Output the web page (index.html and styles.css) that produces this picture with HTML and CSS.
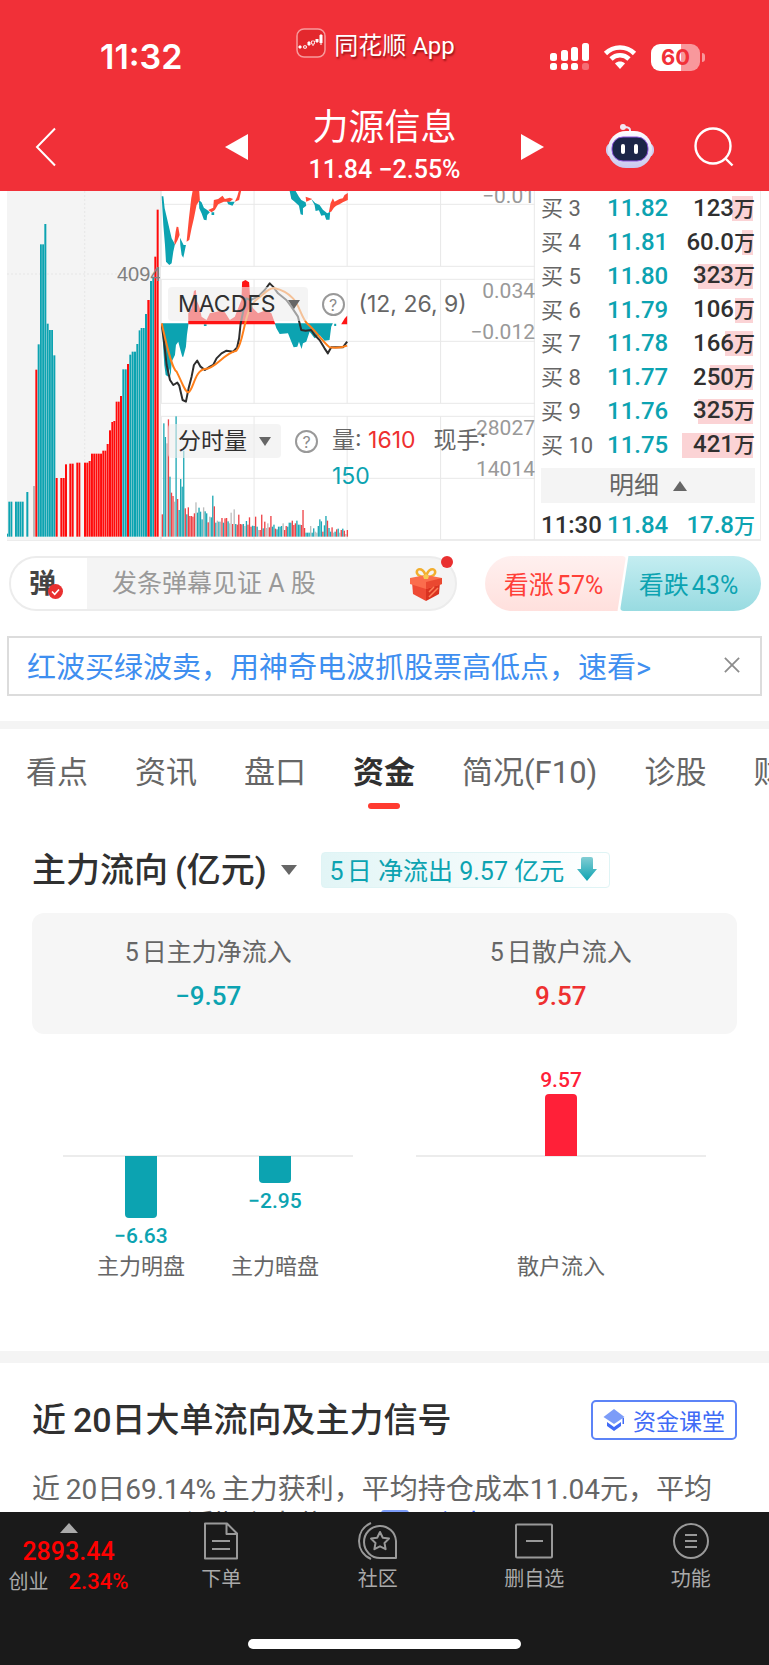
FILE: index.html
```html
<!DOCTYPE html>
<html lang="zh-CN">
<head>
<meta charset="utf-8">
<meta name="viewport" content="width=device-width, initial-scale=1">
<title>力源信息</title>
<link rel="stylesheet" href="styles.css">
</head>
<body>
<div class="app">
  <header class="top">
    <div class="status">
      <span class="clock">11:32</span>
      <span class="from-app">
        <svg class="app-logo" viewBox="0 0 30 30" aria-hidden="true">
          <rect x="1" y="1" width="28" height="28" rx="7" fill="#e3282d" stroke="#f79a9c" stroke-width="1.5"/>
          <path d="M4 17v4M9 17v4M13 13v5M17 13v5M21 11v4M25 6v11" stroke="#fff" stroke-width="1"/>
          <path d="M2.500 18h3v2h-3zM11.500 14h3v3h-3zM19.500 11h3v3h-3zM23.500 7h3v8h-3z" fill="#fff"/>
          <path d="M7.500 18h3v2h-3zM15.500 13h3v3h-3z" fill="#e3282d" stroke="#fff" stroke-width=".8"/>
        </svg>
        同花顺 App
      </span>
      <span class="signals">
        <svg width="39" height="28" viewBox="0 0 39 28" fill="#fff" aria-hidden="true">
          <rect x="0" y="10" width="7" height="8" rx="2.500"/><rect x="11" y="7" width="7" height="11" rx="2.500"/><rect x="21" y="4" width="7" height="14" rx="2.500"/><rect x="32" y="0" width="7" height="18" rx="2.500"/>
          <rect x="0" y="20" width="7" height="7" rx="2.500"/><rect x="11" y="20" width="7" height="7" rx="2.500"/><rect x="21" y="20" width="7" height="7" rx="2.500"/><rect x="32" y="20" width="7" height="7" rx="2.500" opacity=".3"/>
        </svg>
        <svg width="34" height="26" viewBox="0 0 34 26" fill="none" stroke="#fff" stroke-width="4.600" aria-hidden="true">
          <path d="M2.500 9.500C10.500 1.500 23.500 1.500 31.500 9.500M8 15C13 10 21 10 26 15"/>
          <path d="M17 25l-5-5.500c3-2.600 7-2.600 10 0z" fill="#fff" stroke="none"/>
        </svg>
        <span class="battery">60</span>
      </span>
    </div>
    <div class="titlebar">
      <button class="icon-btn back" aria-label="返回"><svg width="22" height="40" viewBox="0 0 22 40" fill="none" stroke="#fff" stroke-width="2"><path d="M20 1.500L2 20l18 18.500"/></svg></button>
      <div class="stock">
        <button class="icon-btn" aria-label="上一只"><svg width="24" height="26" viewBox="0 0 24 26"><path d="M23 0v26L0 13z" fill="#fff"/></svg></button>
        <div class="stock-name"><h1>力源信息</h1><p>11.84 −2.55%</p></div>
        <button class="icon-btn" aria-label="下一只"><svg width="24" height="26" viewBox="0 0 24 26"><path d="M1 0v26l23-13z" fill="#fff"/></svg></button>
      </div>
      <div class="tools">
        <button class="icon-btn" aria-label="智能助手">
          <svg width="48" height="46" viewBox="0 0 48 46">
            <defs><linearGradient id="shell" x2="0" y2="1"><stop offset="0" stop-color="#fff"/><stop offset="1" stop-color="#c9c8ee"/></linearGradient></defs>
            <path d="M24 9V6c0-3-3-3-6-3" fill="none" stroke="#e8e6f8" stroke-width="2"/><circle cx="17" cy="3" r="3" fill="#f4e6f2"/>
            <rect x="0" y="19" width="48" height="14" rx="6" fill="#cfcdf0"/>
            <rect x="2" y="7" width="44" height="37" rx="18" fill="url(#shell)"/>
            <rect x="6" y="13" width="36" height="24" rx="11" fill="#1b2547" stroke="#8c55dc" stroke-width="1"/>
            <rect x="15" y="20" width="4" height="10" rx="2" fill="#fff"/><rect x="28" y="20" width="4" height="10" rx="2" fill="#fff"/>
          </svg>
        </button>
        <button class="icon-btn" aria-label="搜索"><svg width="40" height="40" viewBox="0 0 40 40" fill="none" stroke="#fff" stroke-width="2.400"><circle cx="19" cy="19" r="17.500"/><path d="M31 31l7.500 7.500"/></svg></button>
      </div>
    </div>
  </header>

  <main class="content">
    <section class="trade">
      <div class="depth">
        <svg id="depth" viewBox="21 18 459 1050" preserveAspectRatio="none" aria-hidden="true">
          <path d="M21 267H480M254 18V1068" stroke="#e6e6e6" stroke-width="3" stroke-dasharray="6 6" fill="none"/>
        </svg>
        <span class="depth-label">4094</span>
      </div>
      <div class="minute">
        <svg id="minute" viewBox="483 18 1125 1050" preserveAspectRatio="none" aria-hidden="true">
          <path d="M483 58H1608M483 244H1608M483 283H1608M483 469H1608M483 655H1608M483 694H1608M483 880H1608M483 1066H1608M484 18V244M484 283V655M484 694V1066M763 18V244M763 283V655M763 694V1066M1043 18V244M1043 283V655M1043 694V1066M1324 18V244M1324 283V655M1324 694V1066M1606 18V1066" stroke="#e8e8e8" stroke-width="3" fill="none"/>
          <g fill="#0ca3b1">
            <path d="M485 34H490L494 70 500 95 508 130 515 160 525 178 520 200 515 235 508 240 498 230 495 180 490 120ZM540 158L545 168 551 180 558 180 553 205 550 218 545 210 541 180ZM597 45L605 52 612 68 622 75 630 82 622 90 620 106 612 104 605 85 598 70ZM678 42L690 50 705 50 698 62 685 58ZM635 82h8v8h-8zM870 18H888L898 35 905 45 918 52 920 62 910 70 910 90 903 88 898 62 885 50 875 42ZM935 42L947 54 960 60 970 74 983 85 992 80 990 104 980 104 975 90 965 92 958 76 948 78 945 60Z"/>
            <path d="M485 415H566L561 450 558 485 550 515 547 515 540 490 535 470 528 480 525 510 515 530 512 575 508 550 505 575 497 570 493 540ZM825 415H1000L995 425 990 465 975 467 960 450 945 460 930 440 920 470 910 475 906 492 898 470 893 485 882 487 875 470 865 445 840 447 830 430ZM612 418h8v5h-8zM1004 416h6v7h-6z"/>
          </g>
          <path d="M523 170L527 140 530 125 535 126 539 150 533 165 525 180ZM560 170L567 100 574 40 578 18H598L600 45 590 60 582 100 575 130 568 165ZM625 75L640 68 642 45 655 42 668 32 675 42 690 38 700 42 690 50 672 50 655 58 645 75 635 82ZM705 50L712 35 717 18H724L718 45ZM918 35L938 42 920 50ZM988 82L993 55 1000 40 1005 50 1020 42 1030 40 1035 30 1045 24V45L1030 52 1020 58 1010 62 1003 68 995 80Z" fill="#ff4a38"/>
          <path d="M565 418V385L575 370 582 318 588 315 590 345 600 370 605 395 620 405 630 385 660 378 675 382 690 405 705 395 715 370 725 345 727 290 737 285 748 292 752 350 760 370 775 385 800 375 815 385 827 418ZM1025 418L1036 400 1043 392V418Z" fill="#ff1414"/>
          <path d="M485 418L492 470 500 540 510 585 520 600 532 593 538 602 548 645 558 650 566 610 575 575 582 540 592 527 602 545 615 555 630 545 640 540 650 520 665 505 680 497 700 500 712 487 718 460 722 420 730 380 740 340 752 345 775 335 795 315 810 295 820 305 835 325 860 345 875 365 895 395 905 435 918 437 935 435 945 450 960 465 975 490 985 505 995 487 1030 487 1043 470" fill="none" stroke="#2d2d2d" stroke-width="6" stroke-linejoin="round"/>
          <path d="M485 415C500 480 515 550 530 560C550 600 555 622 566 622C580 615 585 555 615 552C650 550 670 505 710 497C735 470 730 370 775 340C800 320 810 308 825 310C850 315 865 325 880 340C900 360 905 400 925 418C950 440 970 470 990 487C1010 490 1030 487 1043 482" fill="none" stroke="#ff7f1a" stroke-width="6"/>
        </svg>
        <span class="axis a1">−0.01</span><span class="axis a2">0.034</span><span class="axis a3">−0.012</span><span class="axis a4">28027</span><span class="axis a5">14014</span>
        <div class="indicator macd">
          <button class="tag tag-wide">MACDFS<i class="caret"></i></button><button class="help" aria-label="说明">?</button><span>(12, 26, 9)</span>
        </div>
        <div class="indicator volume">
          <button class="tag">分时量<i class="caret"></i></button><button class="help" aria-label="说明">?</button>
          <p>量: <b class="up">1610</b><span class="now">现手:</span> <b class="down">150</b></p>
        </div>
      </div>
      <div class="book">
        <table>
          <tr><th>买 3</th><td class="down">11.82</td><td class="qty" style="--w:21px">123<small>万</small></td></tr>
          <tr><th>买 4</th><td class="down">11.81</td><td class="qty" style="--w:11px">60.0<small>万</small></td></tr>
          <tr><th>买 5</th><td class="down">11.80</td><td class="qty" style="--w:55px">323<small>万</small></td></tr>
          <tr><th>买 6</th><td class="down">11.79</td><td class="qty" style="--w:18px">106<small>万</small></td></tr>
          <tr><th>买 7</th><td class="down">11.78</td><td class="qty" style="--w:28px">166<small>万</small></td></tr>
          <tr><th>买 8</th><td class="down">11.77</td><td class="qty" style="--w:43px">250<small>万</small></td></tr>
          <tr><th>买 9</th><td class="down">11.76</td><td class="qty" style="--w:55px">325<small>万</small></td></tr>
          <tr><th>买 10</th><td class="down">11.75</td><td class="qty" style="--w:71px">421<small>万</small></td></tr>
        </table>
        <button class="detail">明细<i class="caret caret-up"></i></button>
        <div class="deal"><time>11:30</time><span class="down">11.84</span><span class="down">17.8<small>万</small></span></div>
      </div>
    </section>

    <section class="social">
      <div class="danmu">
        <button class="danmu-switch" aria-label="弹幕开关">弹<svg width="15" height="15" viewBox="0 0 15 15"><circle cx="7.500" cy="7.500" r="7.500" fill="#e93030"/><path d="M4 7.500l2.700 2.800L11 5.500" fill="none" stroke="#fff" stroke-width="1.600"/></svg></button>
        <input type="text" aria-label="发弹幕" placeholder="发条弹幕见证 A 股">
        <button class="icon-btn gift" aria-label="礼物">
          <svg width="34" height="36" viewBox="0 0 34 36">
            <path d="M17 11C10 11 7 8 8 5s7-3 9 6c2-9 8-9 9-6s-2 6-9 6z" fill="none" stroke="#f2ae2e" stroke-width="2.500"/>
            <path d="M3 16l14 6v13L4 28z" fill="#ee4a34"/><path d="M31 16l-14 6v13l13-7z" fill="#d93220"/>
            <path d="M1 12l16-3 16 3v6l-16 5L1 18z" fill="#fb6d4d"/><path d="M17 16l16-4v6l-16 5z" fill="#ea4830"/>
            <path d="M20 31l9-9M20 26l5-5" stroke="#ff8058" stroke-width="1.500"/><path d="M14 10l3-2 3 2-1 3h-4z" fill="#f8c850"/>
          </svg>
        </button>
      </div>
      <div class="vote">
        <button class="vote-up">看涨57%</button><button class="vote-down">看跌43%</button>
      </div>
    </section>

    <aside class="promo">
      <a href="#promo">红波买绿波卖，用神奇电波抓股票高低点，速看&gt;</a>
      <button class="icon-btn" aria-label="关闭"><svg width="16" height="16" viewBox="0 0 18 18" stroke="#8c8c8c" stroke-width="2"><path d="M1 1l16 16M17 1L1 17"/></svg></button>
    </aside>

    <nav class="tabs">
      <a href="#v">看点</a><a href="#n">资讯</a><a href="#p">盘口</a><a href="#f" class="active">资金</a><a href="#b">简况(F10)</a><a href="#d">诊股</a><a href="#c">财务</a>
    </nav>

    <section class="flow">
      <div class="flow-head">
        <h2>主力流向&thinsp;(亿元)</h2><i class="caret"></i>
        <span class="badge">5日 净流出 9.57 亿元
          <svg width="20" height="24" viewBox="0 0 20 24"><defs><linearGradient id="arrow" x2="0" y2="1"><stop offset="0" stop-color="#82cdd4"/><stop offset="1" stop-color="#0ca3b1"/></linearGradient></defs><path d="M4 2q0-2 2-2h8q2 0 2 2v10h4L10 24 0 12h4z" fill="url(#arrow)"/></svg>
        </span>
      </div>
      <dl class="summary">
        <div><dt>5日主力净流入</dt><dd class="down">−9.57</dd></div>
        <div><dt>5日散户流入</dt><dd class="up">9.57</dd></div>
      </dl>
      <div class="bars">
        <div class="group">
          <div class="col"><div class="pos"></div><div class="neg"><i style="height:62px"></i><b>−6.63</b></div><span>主力明盘</span></div>
          <div class="col"><div class="pos"></div><div class="neg"><i style="height:27px"></i><b>−2.95</b></div><span>主力暗盘</span></div>
        </div>
        <div class="group">
          <div class="col"><div class="pos"><b>9.57</b><i style="height:62px"></i></div><div class="neg"></div><span>散户流入</span></div>
        </div>
      </div>
    </section>

    <section class="orders">
      <div class="orders-head">
        <h2>近&thinsp;20日大单流向及主力信号</h2>
        <button class="lesson"><svg width="22" height="22" viewBox="0 0 22 22"><path d="M11 0l10.500 8L11 15 .5 8z" fill="#7c9cf8"/><path d="M4 13l7 5 7-5v4l-7 5-7-5zM19.500 9h1.500v6h-1.500z" fill="#416bf6"/></svg>资金课堂</button>
      </div>
      <p>近&thinsp;20日69.14%&thinsp;主力获利，平均持仓成本11.04元，平均<br>日 −2.55%，近期主力信号 <i class="mark"></i> <a href="#s">主力买入</a></p>
    </section>
  </main>

  <footer class="dock">
    <nav>
      <a class="index" href="#i"><i class="caret caret-up"></i><strong>2893.44</strong><span><em>创业</em><b>2.34%</b></span></a>
      <a href="#o"><svg viewBox="0 0 40 38"><path d="M4 1.500h22l10 10v25H4zM25.500 2v10H36M11 19h18M11 27h18"/></svg>下单</a>
      <a href="#q"><svg viewBox="0 0 40 38"><path d="M38 36V19a16 16 0 1 0-16 17zM13 1C-3 8-3 30 13 37"/><path d="M22 10l2.800 5.700 6.200.9-4.500 4.400 1.100 6.200L22 24.300l-5.600 2.900 1.100-6.200-4.500-4.400 6.200-.9z"/></svg>社区</a>
      <a href="#r"><svg viewBox="0 0 40 38"><rect x="2" y="2.500" width="36" height="33" rx="1"/><path d="M12 19h17"/></svg>删自选</a>
      <a href="#m"><svg viewBox="0 0 40 38"><circle cx="20" cy="19" r="17"/><path d="M14 13h12M14 19h12M14 25h12"/></svg>功能</a>
    </nav>
    <div class="home-bar"></div>
  </footer>
</div>
<script src="charts.js"></script>
</body>
</html>
```
FILE: styles.css
```css
* { box-sizing: border-box; }
body, h1, h2, p, dl, dd { margin: 0; }
body {
  font-family: Roboto, "Noto Sans CJK SC", sans-serif;
  color: #303030;
  text-autospace: normal;
}
button, input { font: inherit; color: inherit; border: 0; padding: 0; background: none; }
a { color: inherit; text-decoration: none; }
svg { display: block; flex: none; }
i, em { font-style: normal; }
.up { color: #ee3030; }
.down { color: #0ca3b1; }
.icon-btn { display: flex; align-items: center; justify-content: center; }
.caret { display: inline-block; border: 8px solid transparent; border-top: 10px solid #666; border-bottom: 0; }
.caret-up { border-top: 0; border-bottom: 10px solid #666; }

.app { height: 100vh; display: flex; flex-direction: column; overflow: hidden; }

.top { background: #f13038; color: #fff; flex: none; }
.status { display: grid; grid-template-columns: 1fr auto 1fr; height: 96px; padding: 0 69px; }
.clock { font: 600 34px/36px Inter, sans-serif; margin: 39px 0 0 31px; }
.from-app { display: flex; align-items: center; gap: 8px; height: 30px; margin-top: 28px; padding-right: 18px; font-size: 24px; text-shadow: 1px 2px 2px rgba(90, 0, 0, .6); }
.app-logo { width: 30px; height: 30px; }
.signals { display: flex; align-items: center; justify-content: flex-end; gap: 14px; height: 28px; margin-top: 43px; }
.battery { position: relative; width: 49px; height: 27px; border-radius: 9px; background: linear-gradient(90deg, #fff 61%, #f8989c 61%); color: #f13038; font: 700 22px/27px Inter, sans-serif; text-align: center; }
.battery::after { content: ""; position: absolute; left: 51px; top: 9px; width: 3px; height: 9px; border-radius: 0 3px 3px 0; background: #f8989c; }
.titlebar { display: grid; grid-template-columns: 1fr auto 1fr; align-items: center; height: 95px; padding: 6px 35px 0; }
.back { width: 22px; }
.stock { display: flex; align-items: center; gap: 59px; }
.stock-name { text-align: center; }
.stock-name h1 { font-weight: 400; font-size: 36px; line-height: 40px; }
.stock-name p { margin-top: 6px; font-weight: 500; font-size: 25px; line-height: 32px; }
.tools { display: flex; justify-content: flex-end; align-items: center; gap: 40px; }

.content { flex: 1; min-height: 0; overflow: hidden; background: #fff; }
.trade { display: grid; grid-template-columns: 153fr 375fr 226fr; margin: 0 8px 0 7px; height: 350px; border-bottom: 2px solid #ececec; }
.trade svg { width: 100%; height: 350px; }
.depth { position: relative; background: #f4f4f4; overflow: hidden; }
.depth-label { position: absolute; left: 110px; top: 71px; font: 20px/24px "Liberation Sans", sans-serif; color: #808080; }
.minute { position: relative; overflow: hidden; border-left: 1px solid #e8e8e8; }
.axis { position: absolute; right: 0; font-size: 21px; line-height: 24px; color: #999; }
.a1 { top: -7px; }
.a2 { top: 88px; }
.a3 { top: 129px; }
.a4 { top: 225px; }
.a5 { top: 266px; }
.indicator { position: absolute; left: 7px; display: flex; font: 23px/34px Inter, "Noto Sans CJK SC", sans-serif; color: #666; text-autospace: no-autospace; white-space: nowrap; }
.macd { top: 96px; }
.volume { top: 233px; }
.tag { display: flex; align-items: center; gap: 12px; height: 34px; padding: 0 10px; border-radius: 4px; background: rgba(236, 236, 236, .6); color: #303030; }
.tag-wide { padding-right: 8px; }
.tag .caret { border-width: 9px 6px 0; }
.help { width: 23px; height: 23px; margin: 6px 14px 0; border: 2px solid #999; border-radius: 50%; color: #8c8c8c; font-size: 16px; line-height: 18px; }
.volume p { width: 170px; margin-top: -2px; white-space: normal; line-height: 36px; }
.minute b { font-weight: 400; }
.now { margin-left: 18px; }
.book { padding: 1px 5px 0 6px; border-right: 1px solid #ececec; text-autospace: no-autospace; }
.book table { width: 100%; height: 270px; border-collapse: collapse; table-layout: fixed; }
.book th { width: 60px; padding: 0; text-align: left; font-weight: 400; font-size: 22px; line-height: 25px; color: #666; white-space: nowrap; }
.book td { padding: 0 0 0 6px; font-size: 24px; line-height: 25px; font-weight: 500; }
.book small { font-size: 21px; font-weight: 500; }
.book .qty { padding: 0; text-align: right; background: linear-gradient(#fbd3d5, #fbd3d5) right 2px center / var(--w) 25px no-repeat; }
.detail { display: flex; align-items: center; justify-content: center; gap: 14px; width: 100%; height: 35px; margin-top: 6px; background: #f4f4f4; color: #666; font-size: 25px; line-height: 35px; }
.detail .caret { border-width: 0 7px 10px; }
.deal { display: grid; grid-template-columns: 66px 1fr auto; font-weight: 500; font-size: 24px; line-height: 28px; padding-top: 8px; }

.social { display: flex; justify-content: space-between; gap: 28px; margin: 15px 8px 0 9px; }
.danmu { position: relative; flex: 1; max-width: 448px; display: flex; height: 55px; border: 2px solid #ececec; border-radius: 28px; background: #f4f4f4; }
.danmu::after { content: ""; position: absolute; right: 2px; top: -2px; width: 12px; height: 12px; border-radius: 50%; background: #e93030; }
.danmu-switch { position: relative; width: 76px; padding: 0 13px 5px 0; border-radius: 26px 0 0 26px; background: #fff; font-weight: 700; font-size: 27px; color: #444; }
.danmu-switch svg { position: absolute; left: 37px; top: 26px; }
.danmu input { flex: 1; min-width: 0; padding-left: 25px; font-size: 25px; }
.danmu input::placeholder { color: #999; opacity: 1; }
.gift { margin-right: 12px; }
.vote { display: flex; width: 276px; height: 55px; font-size: 25px; }
.vote button { height: 55px; padding: 0 4px 2px 0; white-space: nowrap; }
.vote-up { flex: 1; border-radius: 28px 4px 4px 28px; background: linear-gradient(#fff0ef, #ffe0dd); color: #ff4038; clip-path: polygon(0 0, 100% 0, 94% 100%, 0 100%); }
.vote-down { flex: 1; margin-left: -6px; border-radius: 4px 28px 28px 4px; background: linear-gradient(#c4edf1, #98dbe1); color: #0ca3b1; clip-path: polygon(6% 0, 100% 0, 100% 100%, 0 100%); }

.promo { display: flex; align-items: center; justify-content: space-between; margin: 25px 7px; height: 60px; padding: 0 20px 2px 18px; border: 2px solid #dcdcdc; font-size: 29px; color: #3f8ff0; white-space: nowrap; }

.tabs { display: flex; gap: 47px; height: 92px; padding: 11px 0 0 26px; border-top: 8px solid #f4f4f4; font-size: 31px; line-height: 66px; color: #666; white-space: nowrap; overflow: hidden; }
.tabs a { flex: none; position: relative; text-autospace: no-autospace; }
.tabs .active { color: #303030; font-weight: 700; }
.tabs .active::after { content: ""; position: absolute; left: 50%; top: 63px; width: 32px; height: 6px; margin-left: -16px; border-radius: 3px; background: #ff3b30; }

.flow { padding: 39px 32px 0; }
.flow-head { display: flex; align-items: center; height: 36px; }
h2 { font-weight: 500; font-size: 34px; line-height: 40px; white-space: nowrap; text-autospace: no-autospace; }
.flow-head .caret { margin: 0 24px 0 14px; }
.badge { display: flex; align-items: center; gap: 13px; height: 36px; padding: 0 12px 2px 8px; border: 1px solid #dff4f5; border-radius: 4px; background: linear-gradient(90deg, #e2f5f6, #fff); color: #0ca3b1; font-size: 25px; white-space: nowrap; }
.summary { display: flex; margin-top: 25px; padding: 22px 0 22px; border-radius: 12px; background: #f6f6f6; text-align: center; }
.summary div { flex: 1; }
.summary dt { font-size: 25px; line-height: 36px; color: #666; }
.summary dd { font-weight: 500; font-size: 26px; line-height: 32px; margin-top: 9px; }
.bars { display: flex; gap: 63px; padding: 0 31px; }
.group { flex: 1; display: flex; justify-content: center; background: linear-gradient(#ececec, #ececec) 0 121px / 100% 2px no-repeat; }
.col { width: 134px; display: flex; flex-direction: column; align-items: center; font-size: 22px; line-height: 28px; color: #666; }
.pos, .neg { display: flex; flex-direction: column; align-items: center; }
.pos { height: 122px; justify-content: flex-end; color: #ff2038; }
.neg { height: 97px; color: #0ca3b1; }
.col i { width: 32px; background: currentColor; }
.pos i { border-radius: 4px 4px 0 0; }
.neg i { border-radius: 0 0 4px 4px; }
.col b { font-weight: 500; font-size: 21px; line-height: 28px; }
.neg b { margin-top: 4px; }

.orders { margin-top: 70px; padding: 37px 32px 0; border-top: 12px solid #f4f4f4; }
.orders-head { display: flex; justify-content: space-between; align-items: center; }
.lesson { display: flex; align-items: center; gap: 8px; height: 40px; padding: 0 10px; border: 2px solid #5c83f7; border-radius: 5px; color: #416bf6; font-size: 23px; white-space: nowrap; }
.orders p { margin-top: 32px; font-size: 28px; line-height: 36px; color: #666; white-space: nowrap; text-autospace: no-autospace; }
.orders p a { color: #416bf6; }
.mark { display: inline-block; width: 28px; height: 28px; margin: 0 17px 0 20px; border-radius: 3px; background: #7c9cf8; vertical-align: -3px; }

.dock { flex: none; height: 153px; background: #1a1a1a; color: #aaa; display: flex; flex-direction: column; justify-content: space-between; align-items: center; }
.dock nav { display: flex; width: 100%; padding-top: 10px; font-size: 20px; line-height: 26px; }
.dock nav a { flex: 1; display: flex; flex-direction: column; align-items: center; gap: 6px; }
.dock nav .index { flex: 0 0 143px; gap: 0; padding: 1px 6px 0 0; }
.index .caret { border-bottom-color: #aaa; border-width: 0 9px 10px; }
.index strong { font-weight: 500; font-size: 25px; line-height: 28px; margin-top: 5px; color: #f00; }
.index span { display: flex; gap: 20px; line-height: 30px; margin-top: 1px; }
.index b { font-weight: 500; font-size: 22px; color: #f00; }
.dock svg { width: 40px; height: 38px; fill: none; stroke: #999; stroke-width: 2; stroke-linejoin: round; }
.home-bar { width: 273px; height: 10px; margin-bottom: 16px; border-radius: 5px; background: #fff; }
```
FILE: charts.js
```javascript
const NS = "http://www.w3.org/2000/svg";
const COLORS = { t: "#0ca3b1", r: "#ff0a0a", g: "#b9b9b9" };
const BASE = 1055;

function bar(svg, x, width, top, fill) {
  const rect = document.createElementNS(NS, "rect");
  rect.setAttribute("x", x);
  rect.setAttribute("y", top);
  rect.setAttribute("width", width);
  rect.setAttribute("height", BASE - top);
  rect.setAttribute("fill", fill);
  svg.append(rect);
}

// Each run: colour, left, right, top
const depth = document.getElementById("depth");
[
  ["t", 21, 25, 1046], ["t", 25, 38, 950], ["t", 45, 72, 950], ["t", 79, 86, 921], ["g", 99, 106, 903],
  ["r", 106, 113, 554], ["t", 113, 120, 478], ["t", 120, 133, 178], ["t", 133, 140, 117],
  ["t", 140, 147, 416], ["t", 147, 160, 435], ["t", 160, 167, 511], ["r", 167, 174, 879],
  ["r", 181, 195, 879], ["r", 195, 202, 838], ["r", 208, 222, 836], ["r", 229, 242, 833],
  ["r", 252, 266, 833], ["r", 266, 273, 828], ["r", 273, 307, 806], ["r", 307, 320, 797],
  ["r", 320, 327, 777], ["r", 327, 334, 736], ["r", 334, 340, 711], ["r", 340, 347, 708],
  ["r", 347, 360, 650], ["r", 360, 367, 633], ["t", 367, 381, 553], ["r", 381, 388, 537],
  ["t", 388, 395, 509], ["t", 395, 409, 500], ["t", 409, 416, 477], ["t", 416, 422, 436],
  ["t", 422, 435, 429], ["t", 435, 442, 387], ["r", 442, 450, 345], ["t", 450, 457, 288],
  ["t", 457, 463, 275], ["r", 463, 470, 215], ["r", 470, 477, 74]
].forEach(([c, left, right, top]) => {
  const count = Math.max(1, Math.round((right - left) / 6.8));
  const step = (right - left) / count;
  for (let i = 0; i < count; i++) bar(depth, left + i * step, step - 1, top, COLORS[c]);
});

// Per-minute volume: colour and height
const minute = document.getElementById("minute");
const first = minute.querySelector("g");
const layer = document.createElementNS(NS, "g");
minute.insertBefore(layer, first);
const tones = { t: "#1fa8b4", r: "#ee4347", g: "#bdbdbd" };
("r67 t340 t299 g280 r352 t180 r132 r122 g105 t361 r113 t80 t173 t150 t258 r85 t67 r88 r62 r62 r60 r70 g103 t72 t87 " +
 "t75 t52 g88 t76 t70 r43 g60 t58 t123 r91 t42 g48 t45 g45 r56 t42 r55 r56 t46 g40 g72 r38 g82 t38 r36 r66 r38 " +
 "r37 t38 g32 t47 r36 r58 r30 t33 t32 r60 t30 g20 r20 r66 t25 r45 g26 g40 r28 r62 t30 t36 r24 t22 t30 t30 t32 g40 " +
 "r20 r32 t30 t42 t42 r48 r35 r40 t48 t36 t36 r35 r80 r26 t12 t12 t12 g32 t12 t25 g15 g12 t32 t52 t46 r15 t34 t62 " +
 "r48 t26 t15 r28 g12 t15 r22 t24 g12 r20 t24 r18 g8 r20")
  .split(" ")
  .forEach((item, i) => bar(layer, 485 + i * 4.6, 4, BASE - Number(item.slice(1)), tones[item[0]]));
```
